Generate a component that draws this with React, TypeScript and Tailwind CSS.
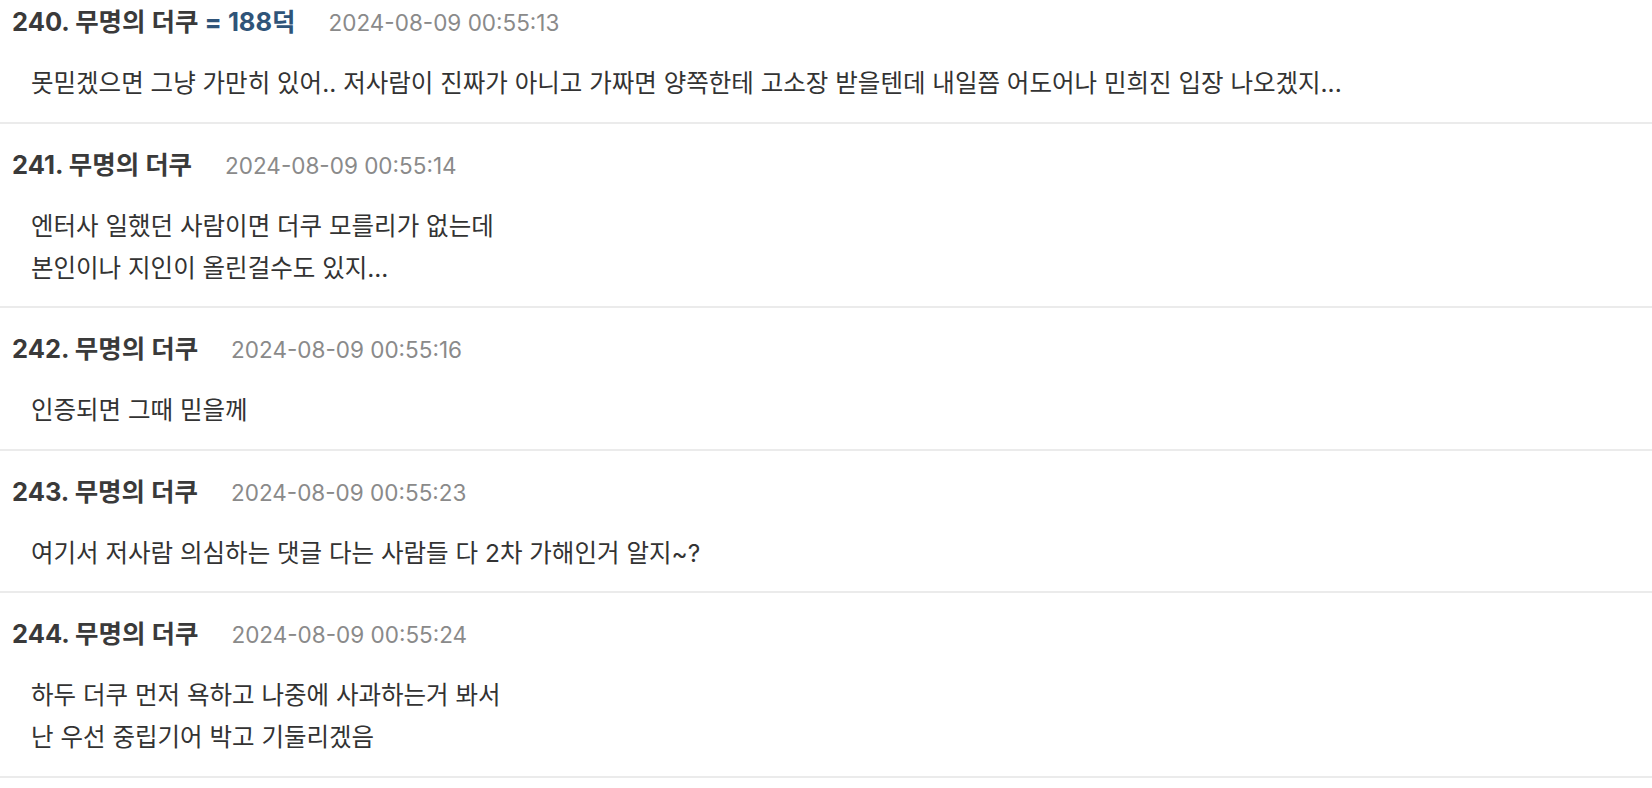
import React from "react";

type Comment = {
  no: number;
  name: string;
  badge?: string;
  date: string;
  lines: string[];
};

const comments: Comment[] = [
  {
    no: 240,
    name: "무명의 더쿠",
    badge: "= 188덕",
    date: "2024-08-09 00:55:13",
    lines: [
      "못믿겠으면 그냥 가만히 있어.. 저사람이 진짜가 아니고 가짜면 양쪽한테 고소장 받을텐데 내일쯤 어도어나 민희진 입장 나오겠지...",
    ],
  },
  {
    no: 241,
    name: "무명의 더쿠",
    date: "2024-08-09 00:55:14",
    lines: ["엔터사 일했던 사람이면 더쿠 모를리가 없는데", "본인이나 지인이 올린걸수도 있지..."],
  },
  {
    no: 242,
    name: "무명의 더쿠",
    date: "2024-08-09 00:55:16",
    lines: ["인증되면 그때 믿을께"],
  },
  {
    no: 243,
    name: "무명의 더쿠",
    date: "2024-08-09 00:55:23",
    lines: ["여기서 저사람 의심하는 댓글 다는 사람들 다 2차 가해인거 알지~?"],
  },
  {
    no: 244,
    name: "무명의 더쿠",
    date: "2024-08-09 00:55:24",
    lines: ["하두 더쿠 먼저 욕하고 나중에 사과하는거 봐서", "난 우선 중립기어 박고 기둘리겠음"],
  },
];

function Row({ c }: { c: Comment }) {
  return (
    <div className="border-b-2 border-[#ebebeb] pl-[12px] pr-4 pt-[26px] pb-[17.5px]">
      <div className="flex items-baseline whitespace-nowrap leading-[30px]">
        <span className="text-[25.5px] font-bold text-[#3a3a3a]">
          {c.no}. {c.name}
          {c.badge ? <span className="text-[#2f5479]"> {c.badge}</span> : null}
        </span>
        <span className="ml-[33px] text-[22.5px] text-[#8a8a8a]">{c.date}</span>
      </div>
      <div className="mt-[24px] pl-[19px] text-[24.5px] leading-[42px] text-[#333333]">
        {c.lines.map((l, i) => (
          <div key={i} className="whitespace-nowrap">
            {l}
          </div>
        ))}
      </div>
    </div>
  );
}

export default function App() {
  return (
    <div className="h-[788px] w-full overflow-hidden bg-white font-['Inter','Noto_Sans_CJK_KR',sans-serif]">
      <div className="-mt-[19px]">
        {comments.map((c) => (
          <Row key={c.no} c={c} />
        ))}
      </div>
    </div>
  );
}
